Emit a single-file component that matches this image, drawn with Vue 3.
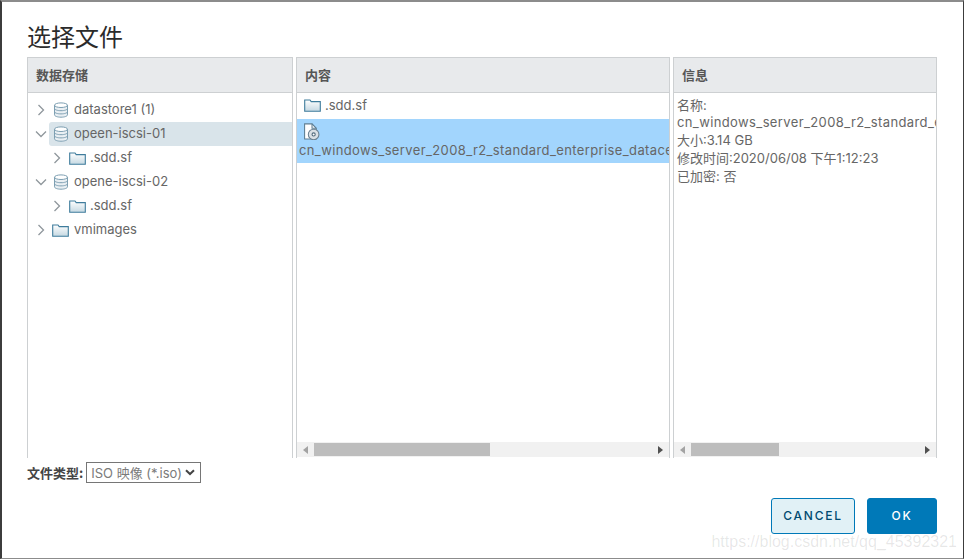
<script setup>
const tree = [
  { label: 'datastore1 (1)', icon: 'db', depth: 0, open: false },
  { label: 'opeen-iscsi-01', icon: 'db', depth: 0, open: true, selected: true },
  { label: '.sdd.sf', icon: 'folder', depth: 1, open: false },
  { label: 'opene-iscsi-02', icon: 'db', depth: 0, open: true },
  { label: '.sdd.sf', icon: 'folder', depth: 1, open: false },
  { label: 'vmimages', icon: 'folder', depth: 0, open: false }
]
const fileName = 'cn_windows_server_2008_r2_standard_enterprise_datacenter_web_x64_dvd'
const info = ['名称:', fileName + '.iso', '大小:3.14 GB', '修改时间:2020/06/08 下午1:12:23', '已加密: 否']
</script>

<template>
  <div class="dialog">
    <h1 class="title">选择文件</h1>
    <div class="panels">
      <section class="panel tree-panel">
        <header class="head">数据存储</header>
        <div class="tree">
          <div v-for="(n, i) in tree" :key="i" class="node" :class="['d' + n.depth]">
            <svg class="chev" :class="{ open: n.open }" width="12" height="12" viewBox="0 0 12 12">
              <path d="M3.5 1 L8.5 6 L3.5 11" fill="none" stroke="#8f979c" stroke-width="1.3" />
            </svg>
            <div class="node-body" :class="{ selected: n.selected }">
              <svg v-if="n.icon === 'db'" class="ic-db" width="16" height="16" viewBox="0 0 16 16">
                <path d="M1.5 3.5 V12.8 C1.5 14.2 4.5 15.2 8 15.2 C11.5 15.2 14.5 14.2 14.5 12.8 V3.5 Z" fill="#e9eff3" />
                <ellipse cx="8" cy="3.2" rx="6.5" ry="2.3" fill="#fff" stroke="#7d9fb2" />
                <path d="M1.5 3.2 V12.8 C1.5 14.2 4.5 15.2 8 15.2 C11.5 15.2 14.5 14.2 14.5 12.8 V3.2 M1.5 6.4 C1.5 7.8 4.5 8.7 8 8.7 C11.5 8.7 14.5 7.8 14.5 6.4 M1.5 9.6 C1.5 11 4.5 11.9 8 11.9 C11.5 11.9 14.5 11 14.5 9.6" fill="none" stroke="#7d9fb2" />
              </svg>
              <svg v-else class="ic-folder" width="17" height="13" viewBox="0 0 17 13">
                <defs>
                  <linearGradient :id="'fg' + i" x1="0" y1="0" x2="0" y2="1">
                    <stop offset="0" stop-color="#fff" />
                    <stop offset="1" stop-color="#c5d8e2" />
                  </linearGradient>
                </defs>
                <path d="M.7 12.3 V1 H6 L7.2 2.6 H16.3 V12.3 Z" :fill="'url(#fg' + i + ')'" stroke="#3f7c9c" stroke-width="1.1" />
              </svg>
              <span class="label">{{ n.label }}</span>
            </div>
          </div>
        </div>
      </section>

      <section class="panel list-panel">
        <header class="head">内容</header>
        <div class="list">
          <div class="folder-row">
            <svg class="row-folder" width="17" height="13" viewBox="0 0 17 13">
              <defs>
                <linearGradient id="fgl" x1="0" y1="0" x2="0" y2="1">
                  <stop offset="0" stop-color="#fff" />
                  <stop offset="1" stop-color="#c5d8e2" />
                </linearGradient>
              </defs>
              <path d="M.7 12.3 V1 H6 L7.2 2.6 H16.3 V12.3 Z" fill="url(#fgl)" stroke="#3f7c9c" stroke-width="1.1" />
            </svg>
            <span class="label">.sdd.sf</span>
          </div>
          <div class="file-row">
            <svg class="iso" width="17" height="17" viewBox="0 0 16 16">
              <path d="M1.5 15 V.8 H8.5 L12.5 5 V15 Z" fill="#fff" stroke="#5c7d92" />
              <path d="M8.5 .8 V5 H12.5" fill="none" stroke="#5c7d92" />
              <circle cx="10" cy="10.8" r="5" fill="#d9dfe4" stroke="#6b8191" />
              <circle cx="10" cy="10.8" r="1.5" fill="#fff" stroke="#50697b" />
            </svg>
            <div class="file-name">{{ fileName }}</div>
          </div>
        </div>
        <div class="scrollbar">
          <span class="arrow left"></span>
          <span class="track"><span class="thumb thumb-list"></span></span>
          <span class="arrow right"></span>
        </div>
      </section>

      <section class="panel info-panel">
        <header class="head">信息</header>
        <div class="info">
          <div v-for="(line, i) in info" :key="i" class="info-line">{{ line }}</div>
        </div>
        <div class="scrollbar">
          <span class="arrow left"></span>
          <span class="track"><span class="thumb thumb-info"></span></span>
          <span class="arrow right"></span>
        </div>
      </section>
    </div>

    <div class="type-row">
      <label class="type-label" for="ft">文件类型:</label>
      <select id="ft" class="type-select">
        <option>ISO 映像 (*.iso)</option>
      </select>
    </div>

    <div class="actions">
      <button class="btn cancel">CANCEL</button>
      <button class="btn ok">OK</button>
    </div>

    <div class="watermark">https://blog.csdn.net/qq_45392321</div>
  </div>
</template>

<style>
html, body { margin: 0; background: #fff; overflow: hidden; }
</style>

<style scoped>
.dialog {
  position: relative;
  box-sizing: border-box;
  width: 964px;
  height: 559px;
  padding: 0 26px 0 25px;
  border-top: 2px solid #8c8c8c;
  border-left: 2px solid #3c3c3c;
  border-right: 1px solid #3c3c3c;
  border-bottom: 1px solid #8c8c8c;
  background: #fff;
  font-family: Inter, "Noto Sans CJK SC", sans-serif;
  color: #666;
  overflow: hidden;
}
.title {
  margin: 0;
  height: 55px;
  box-sizing: border-box;
  padding-top: 18px;
  font: 400 24px/32px "Noto Sans CJK SC", sans-serif;
  color: #2b2b2b;
}
.panels {
  display: grid;
  grid-template-columns: 266px 374px 264px;
  gap: 3px;
  height: 401px;
}
.panel {
  box-sizing: border-box;
  display: flex;
  flex-direction: column;
  min-width: 0;
  border: 1px solid #cdd0d2;
  border-bottom: 0;
  overflow: hidden;
}
.head {
  flex: none;
  height: 35px;
  box-sizing: border-box;
  padding-left: 8px;
  background: #e8eaec;
  border-bottom: 1px solid #cdd0d2;
  font: 700 13px/33px "Noto Sans CJK SC", sans-serif;
  color: #565656;
}
.tree {
  flex: 1;
  padding-top: 5px;
}
.node {
  display: flex;
  align-items: center;
  height: 24px;
}
.node.d1 { padding-left: 16px; }
.chev {
  flex: none;
  margin-left: 7px;
  margin-right: 2px;
}
.chev.open { transform: rotate(90deg); }
.node-body {
  flex: 1;
  height: 24px;
  display: flex;
  align-items: center;
  gap: 5px;
  padding-left: 4px;
  border-radius: 3px 0 0 3px;
}
.d1 .node-body { padding-left: 5px; gap: 4px; }
.node-body.selected { background: #d9e4ea; }
.ic-db { flex: none; }
.ic-folder { flex: none; margin-left: -1px; }
.label {
  font-size: 13px;
  line-height: 22px;
  height: 24px;
  white-space: nowrap;
}
.list {
  flex: 1;
  min-height: 0;
}
.folder-row {
  height: 26px;
  display: flex;
  align-items: center;
  gap: 4px;
  padding-left: 7px;
}
.row-folder { margin-top: -2px; }
.file-row {
  height: 44px;
  box-sizing: border-box;
  padding: 4px 0 0 2px;
  background: #a2d5fd;
  overflow: hidden;
}
.iso { display: block; margin-left: 4px; }
.file-name {
  font-size: 13px;
  line-height: 20px;
  letter-spacing: 0.38px;
  white-space: nowrap;
}
.info {
  flex: 1;
  min-height: 0;
  padding: 2px 0 0 3px;
  overflow: hidden;
}
.info-line {
  font-size: 13px;
  line-height: 18px;
  height: 18px;
  white-space: nowrap;
}
.info-line:first-child { line-height: 20px; }
.info-line:nth-child(2) { letter-spacing: 0.38px; }
.scrollbar {
  flex: none;
  height: 15px;
  display: flex;
  align-items: center;
  background: #f1f1f1;
  margin-bottom: 1px;
}
.arrow {
  flex: none;
  width: 17px;
  display: flex;
  justify-content: center;
}
.arrow::before {
  content: "";
  width: 0;
  height: 0;
  border-top: 4px solid transparent;
  border-bottom: 4px solid transparent;
}
.arrow.left::before { border-right: 5px solid #a3a3a3; }
.arrow.right::before { border-left: 5px solid #505050; }
.track {
  flex: 1;
  height: 13px;
}
.thumb {
  display: block;
  height: 13px;
  background: #bdbdbd;
}
.thumb-list { width: 176px; }
.thumb-info { width: 88px; }
.type-row {
  display: flex;
  align-items: center;
  gap: 3px;
  height: 21px;
  margin-top: 4px;
}
.type-label {
  font: 700 13px/21px "Noto Sans CJK SC", sans-serif;
  color: #444;
}
.type-select {
  appearance: none;
  width: 115px;
  height: 21px;
  box-sizing: border-box;
  padding: 0 0 0 4px;
  border: 1px solid #767676;
  border-radius: 0;
  background: #fff url("data:image/svg+xml,%3Csvg xmlns='http://www.w3.org/2000/svg' width='10' height='7'%3E%3Cpath d='M1 1.2 L5 5 L9 1.2' fill='none' stroke='%23444' stroke-width='2'/%3E%3C/svg%3E") no-repeat right 5px center;
  color: #7a7a7a;
  font: 400 13px Inter, "Noto Sans CJK SC", sans-serif;
}
.actions {
  display: flex;
  justify-content: flex-end;
  gap: 12px;
  margin-top: 15px;
}
.btn {
  height: 36px;
  box-sizing: border-box;
  border-radius: 3px;
  font: 500 12px/34px Inter, sans-serif;
  letter-spacing: 1.8px;
  padding: 0;
}
.cancel {
  width: 84px;
  border: 1px solid #0079b8;
  background: #e1f1f6;
  color: #004a70;
}
.ok {
  width: 70px;
  border: 1px solid #0079b8;
  background: #0079b8;
  color: #fff;
}
.watermark {
  position: absolute;
  right: 6px;
  bottom: 6px;
  font: 400 16px/20px "Liberation Sans", sans-serif;
  color: rgba(70, 70, 70, 0.13);
  white-space: nowrap;
}
</style>
